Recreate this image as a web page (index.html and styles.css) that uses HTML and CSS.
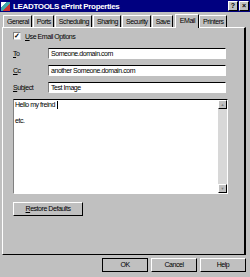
FILE: index.html
```html
<!DOCTYPE html>
<html lang="en">
<head>
  <meta charset="UTF-8">
  <title>LEADTOOLS ePrint Properties</title>
  <link rel="stylesheet" href="styles.css">
</head>
<body>
  <div class="window">
    <div class="titlebar">
      <span class="app-icon"></span>
      <span class="title">LEADTOOLS ePrint Properties</span>
      <span class="tb-btns">
        <span class="tb-btn">?</span>
        <span class="tb-btn">&times;</span>
      </span>
    </div>

    <div class="tabs">
      <span class="tab">General</span>
      <span class="tab">Ports</span>
      <span class="tab">Scheduling</span>
      <span class="tab">Sharing</span>
      <span class="tab">Security</span>
      <span class="tab">Save</span>
      <span class="tab active">EMail</span>
      <span class="tab">Printers</span>
    </div>

    <div class="panel">
      <div class="check-row">
        <span class="checkbox">&#10003;</span>
        <span><u>U</u>se Email Options</span>
      </div>
      <div class="field">
        <span class="lbl"><u>T</u>o</span>
        <span class="input">Someone.domain.com</span>
      </div>
      <div class="field">
        <span class="lbl"><u>C</u>c</span>
        <span class="input">another Someone.domain.com</span>
      </div>
      <div class="field">
        <span class="lbl"><u>S</u>ubject</span>
        <span class="input">Test Image</span>
      </div>
      <div class="memo">
        <div class="memo-text">
          <div>Hello my freind<span class="caret"></span></div>
          <div class="blank"></div>
          <div>etc.</div>
        </div>
        <div class="scrollbar">
          <span class="sb-btn">&#9650;</span>
          <span class="sb-btn">&#9660;</span>
        </div>
      </div>
      <span class="btn restore"><u>R</u>estore Defaults</span>
    </div>

    <div class="footer">
      <span class="btn default">OK</span>
      <span class="btn">Cancel</span>
      <span class="btn">Help</span>
    </div>
  </div>
</body>
</html>
```

FILE: styles.css
```css
/* Win9x-стиль диалога свойств */
:root {
  --face: #c0c0c0;
  --light: #ffffff;
  --shadow: #808080;
  --dark: #000000;
  --navy: #000080;
}
body { margin:0; background:var(--face); font-family:'Liberation Sans', Arial, sans-serif; font-size:7px; letter-spacing:-0.45px; color:#000; }

.window { width:250px; height:277px; display:flex; flex-direction:column; overflow:hidden; }

.titlebar { height:12px; background:var(--navy); display:flex; align-items:center; padding:0 1px; }
.app-icon { width:9px; height:9px; background:linear-gradient(135deg, #fff 0 30%, #4aa 30% 60%, #c33 60%); margin-right:3px; }
.title { color:#fff; font-weight:bold; font-size:8px; flex:1; letter-spacing:-0.35px; }
.tb-btns { display:flex; gap:1px; }
.tb-btn { width:8px; height:8px; background:var(--face); font-size:7px; font-weight:bold; line-height:8px; text-align:center; letter-spacing:0; border-top:1px solid var(--light); border-left:1px solid var(--light); border-right:1px solid var(--dark); border-bottom:1px solid var(--dark); }

.tabs { height:15px; display:flex; align-items:flex-end; padding-left:3px; }
.tab { height:11px; line-height:11px; padding:0 2px 0 3px; border-top:1px solid var(--light); border-left:1px solid var(--light); border-right:1px solid var(--dark); margin-right:1px; }
.tab.active { height:13px; padding:0 3px 0 4px; margin:0 0 -1px 1px; background:var(--face); position:relative; z-index:1; }

.panel { margin:0 4px 0 2px; height:228px; border-top:1px solid var(--light); border-left:1px solid var(--light); border-right:2px solid var(--dark); border-bottom:1px solid var(--dark); box-sizing:border-box; padding:3px 16px 0 10px; display:flex; flex-direction:column; }

.check-row { display:flex; align-items:center; gap:4px; height:10px; margin-bottom:7px; }
.checkbox { width:6px; height:6px; background:#fff; border-top:1px solid var(--shadow); border-left:1px solid var(--shadow); border-right:1px solid #ddd; border-bottom:1px solid #ddd; font-size:7px; line-height:6px; text-align:center; font-weight:bold; letter-spacing:0; }

.field { display:flex; align-items:center; height:11px; margin-bottom:6px; }
.lbl { width:35px; }
.input { flex:1; height:11px; line-height:10px; background:#fff; box-sizing:border-box; padding-left:2px; margin-right:2px; border-top:1px solid var(--dark); border-left:1px solid var(--shadow); border-right:1px solid var(--light); border-bottom:1px solid var(--light); }

.memo { height:95px; background:#fff; display:flex; border-top:1px solid var(--dark); border-left:1px solid var(--shadow); border-right:1px solid var(--light); border-bottom:1px solid var(--light); box-sizing:border-box; }
.memo-text { flex:1; padding:1px; line-height:8px; }
.memo-text .blank { height:8px; }
.caret { display:inline-block; width:1px; height:8px; background:#000; margin-left:2px; vertical-align:top; }
.scrollbar { width:9px; background:#d8d8d8; display:flex; flex-direction:column; justify-content:space-between; }
.sb-btn { height:9px; background:var(--face); font-size:4px; line-height:8px; text-align:center; color:var(--shadow); letter-spacing:0; box-sizing:border-box; border-right:1px solid var(--dark); border-bottom:1px solid var(--dark); border-top:1px solid var(--light); border-left:1px solid var(--light); }

.btn { height:14px; line-height:12px; text-align:center; background:var(--face); box-sizing:border-box; border-top:1px solid var(--light); border-left:1px solid var(--light); border-right:1px solid var(--dark); border-bottom:1px solid var(--dark); }
.restore { width:70px; margin-top:8px; }

.footer { display:flex; justify-content:flex-end; gap:3px; padding:3px 4px 0 0; }
.footer .btn { width:46px; }
.footer .btn.default { border:1px solid var(--dark); }
```
